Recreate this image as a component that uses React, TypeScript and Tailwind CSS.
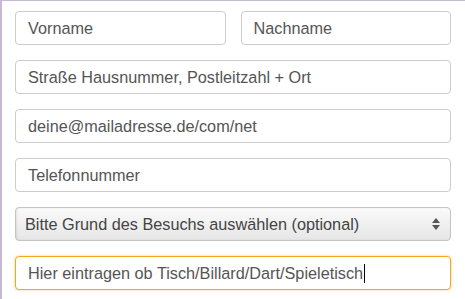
export default function App() {
  const field =
    'h-[34px] w-full rounded-[4px] border border-[#cccccc] bg-white px-[12px] flex items-center text-[16.25px] text-[#555555] whitespace-nowrap overflow-hidden'

  return (
    <div
      className="h-[299px] w-[465px] overflow-hidden border-l-2 border-t border-[#c6b9d6] bg-white pl-[13px] pr-[14px] pt-[10px]"
      style={{ fontFamily: '"Liberation Sans", Arial, sans-serif' }}
    >
      <div className="flex flex-col gap-[15px]">
        <div className="flex gap-[15px]">
          <div className={field}>Vorname</div>
          <div className={field}>Nachname</div>
        </div>
        <div className={field}>Straße Hausnummer, Postleitzahl + Ort</div>
        <div className={field}>deine@mailadresse.de/com/net</div>
        <div className={field}>Telefonnummer</div>
        <div className="h-[34px] w-full rounded-[4px] border border-[#c4c4c4] bg-gradient-to-b from-[#fafafa] to-[#e6e6e6] pl-[9px] pr-[10px] flex items-center justify-between text-[16.25px] text-[#444444] whitespace-nowrap shadow-[inset_1px_0_2px_rgba(0,0,0,0.08)]">
          <span>Bitte Grund des Besuchs auswählen (optional)</span>
          <svg width="8" height="12" viewBox="0 0 8 12" className="shrink-0">
            <path d="M4 0 L8 5 L0 5 Z" fill="#555555" />
            <path d="M0 7 L8 7 L4 12 Z" fill="#555555" />
          </svg>
        </div>
        <div className="h-[34px] w-full rounded-[4px] border border-[#f5a623] bg-white px-[12px] flex items-center text-[16.25px] text-[#555555] whitespace-nowrap shadow-[0_0_3px_rgba(245,166,35,0.5)]">
          <span>Hier eintragen ob Tisch/Billard/Dart/Spieletisch</span>
          <span className="ml-[1px] inline-block h-[19px] w-[1px] bg-black" />
        </div>
      </div>
    </div>
  )
}
